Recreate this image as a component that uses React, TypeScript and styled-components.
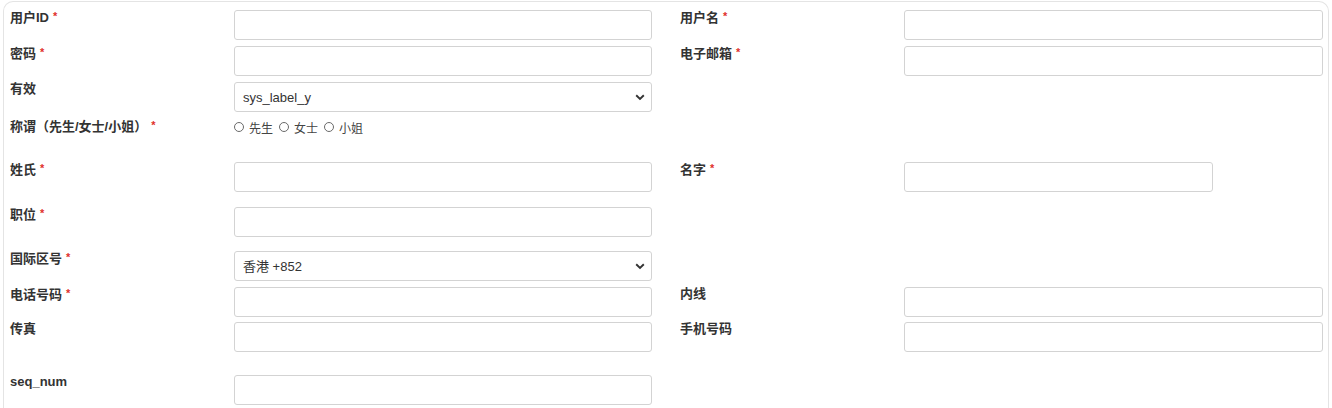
import React from 'react';
import styled, { createGlobalStyle } from 'styled-components';

type FieldDef = {
	label: string;
	required?: boolean;
	kind?: 'input' | 'select' | 'radio';
	value?: string;
	width?: number;
};

type RowDef = {
	left: FieldDef;
	right?: FieldDef;
	gap: number;
};

const rows: RowDef[] = [
	{ left: { label: '用户ID', required: true }, right: { label: '用户名', required: true }, gap: 6 },
	{ left: { label: '密码', required: true }, right: { label: '电子邮箱', required: true }, gap: 6 },
	{ left: { label: '有效', kind: 'select', value: 'sys_label_y' }, gap: 7 },
	{ left: { label: '称谓（先生/女士/小姐）', required: true, kind: 'radio' }, gap: 27 },
	{ left: { label: '姓氏', required: true }, right: { label: '名字', required: true, width: 309 }, gap: 15 },
	{ left: { label: '职位', required: true }, gap: 14 },
	{ left: { label: '国际区号', required: true, kind: 'select', value: '香港 +852' }, gap: 6 },
	{ left: { label: '电话号码', required: true }, right: { label: '内线' }, gap: 5 },
	{ left: { label: '传真' }, right: { label: '手机号码' }, gap: 23 },
	{ left: { label: 'seq_num' }, gap: 0 },
];

const titles = ['先生', '女士', '小姐'];

const Field = ({ field }: { field: FieldDef }) => (
	<FieldCell>
		<Label>
			{field.label}
			{field.required && <Star>*</Star>}
		</Label>
		{field.kind === 'select' ? (
			<SelectWrap>
				<Select defaultValue={field.value}>
					<option>{field.value}</option>
				</Select>
				<Chevron width="10" height="7" viewBox="0 0 10 7">
					<path d="M1.2 1.3 L5 5 L8.8 1.3" fill="none" stroke="#333" strokeWidth="1.9" />
				</Chevron>
			</SelectWrap>
		) : field.kind === 'radio' ? (
			<RadioGroup>
				{titles.map((t) => (
					<RadioOption key={t}>
						<Radio type="radio" name="title" />
						{t}
					</RadioOption>
				))}
			</RadioGroup>
		) : (
			<TextInput type="text" $width={field.width} />
		)}
	</FieldCell>
);

const App = () => (
	<>
		<GlobalStyle />
		<Panel>
			{rows.map((row, i) => (
				<Row key={i} $gap={row.gap}>
					<Field field={row.left} />
					{row.right ? <Field field={row.right} /> : <div />}
				</Row>
			))}
		</Panel>
	</>
);

export default App;

const GlobalStyle = createGlobalStyle`
	body {
		margin: 0;
		background: #fff;
		font-family: 'Liberation Sans', 'Noto Sans CJK SC', sans-serif;
		color: #333;
	}
`;

const Panel = styled.div`
	margin: 1px 3px 0;
	height: 407px;
	overflow: hidden;
	box-sizing: border-box;
	border: 1px solid #e4e4e4;
	border-bottom: none;
	border-radius: 10px 10px 0 0;
	padding: 8px 5px 0 6px;
`;

const Row = styled.div<{ $gap: number }>`
	display: grid;
	grid-template-columns: 642px 643px;
	column-gap: 28px;
	margin-bottom: ${(p) => p.$gap}px;
`;

const FieldCell = styled.div`
	display: grid;
	grid-template-columns: 224px 1fr;
	align-items: start;
`;

const Label = styled.div`
	font-size: 13px;
	line-height: 13px;
	font-weight: bold;
	color: #333;
	white-space: nowrap;
`;

const Star = styled.span`
	color: #e0302a;
	font-size: 11px;
	margin-left: 4px;
	vertical-align: 2px;
`;

const TextInput = styled.input<{ $width?: number }>`
	box-sizing: border-box;
	width: ${(p) => (p.$width ? `${p.$width}px` : '100%')};
	height: 30px;
	border: 1px solid #d3d3d3;
	border-radius: 3px;
	background: #fff;
	padding: 0 8px;
	font: 13px 'Liberation Sans', 'Noto Sans CJK SC', sans-serif;
	outline: none;
`;

const SelectWrap = styled.div`
	position: relative;
	height: 30px;
`;

const Select = styled.select`
	appearance: none;
	box-sizing: border-box;
	width: 100%;
	height: 30px;
	border: 1px solid #d3d3d3;
	border-radius: 3px;
	background: #fff;
	padding: 0 8px;
	font: 13px 'Liberation Sans', 'Noto Sans CJK SC', sans-serif;
	color: #333;
	outline: none;
`;

const Chevron = styled.svg`
	position: absolute;
	right: 7px;
	top: 12px;
	pointer-events: none;
`;

const RadioGroup = styled.div`
	display: flex;
	align-items: center;
	gap: 6px;
	height: 16px;
	font-size: 12px;
	color: #444;
	font-family: 'Noto Sans CJK SC', sans-serif;
`;

const RadioOption = styled.label`
	display: flex;
	align-items: center;
	gap: 5px;
`;

const Radio = styled.input`
	appearance: none;
	margin: 0;
	width: 10px;
	height: 10px;
	border: 1px solid #6a6a6a;
	border-radius: 50%;
	background: #fff;
`;
